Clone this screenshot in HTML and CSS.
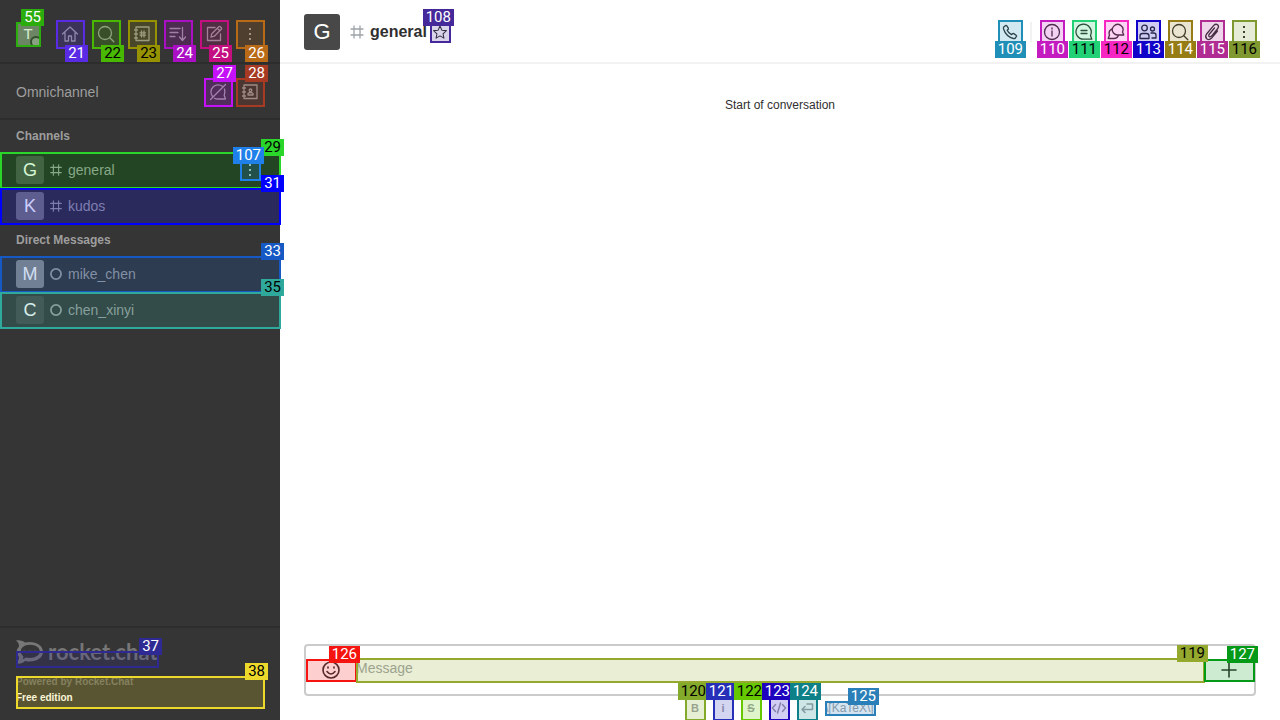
FILE: index.html
```
<!DOCTYPE html>
<html lang="en">
<head>
<meta charset="utf-8">
<title>general</title>
<meta name="viewport" content="width=device-width, initial-scale=1">
<link rel="stylesheet" href="styles.css">
</head>
<body>
<svg class="defs" aria-hidden="true">
  <symbol id="hash" viewBox="0 0 16 16"><path d="M5 2v12M11 2v12M2 5h12M2 11h12"/></symbol>
  <symbol id="search" viewBox="0 0 20 20"><circle cx="9" cy="9" r="6.5"/><path d="M13.8 13.8l4 4"/></symbol>
  <symbol id="kebab" viewBox="0 0 20 20"><path class="solid" d="M9 4h2v2H9zM9 9h2v2H9zM9 14h2v2H9z"/></symbol>
</svg>
<div class="app">
  <aside class="sidebar">
    <header class="topbar">
      <button class="mark up m55 user" aria-label="User menu"><span class="initial">T</span><i class="presence"></i><b class="tag">55</b></button>
      <nav class="tools">
        <button class="mark m21 tool" aria-label="Home"><svg viewBox="0 0 20 20"><path d="M2.500 10 10 3l7.500 7M5 8.500v8.500h3.500V12h3v5H15V8.500"/></svg><b class="tag">21</b></button>
        <button class="mark m22 tool ink" aria-label="Search"><svg><use href="#search"/></svg><b class="tag">22</b></button>
        <button class="mark m23 tool ink" aria-label="Directory"><svg viewBox="0 0 20 20"><path d="M4 3h13v13.500H4zM2.500 6h3M2.500 10h3M2.500 14h3M9.500 7v6M12 7v6M8 8.800h5.500M8 11.200h5.500"/></svg><b class="tag">23</b></button>
        <button class="mark m24 tool" aria-label="Display"><svg viewBox="0 0 20 20"><path d="M2 4.500h10M2 8.500h8M2 12.500h5M14.500 3.500v12.500M11.500 13l3 3.500L17.500 13"/></svg><b class="tag">24</b></button>
        <button class="mark m25 tool" aria-label="Create new"><svg viewBox="0 0 20 20"><path d="M11 3.500H3.500v13h13V10M7 13.200l.8-3.500 7-7q.8-.6 1.500 0l1 1q.7.7 0 1.500l-7 7zM13.300 4.200l2.500 2.500"/></svg><b class="tag">25</b></button>
        <button class="mark m26 tool" aria-label="More"><svg><use href="#kebab"/></svg><b class="tag">26</b></button>
      </nav>
    </header>
    <section class="omni">
      <span class="omni-title">Omnichannel</span>
      <button class="mark up m27 tool" aria-label="Turn on answer chats"><svg viewBox="0 0 20 20"><path d="M4.500 14.500A7.200 7.200 0 0 1 14.500 4.300M16.500 7q1 3.500-.3 6.300l1.300 3.700H10q-2 0-3.500-.8M2.500 17.500l15-15"/></svg><b class="tag">27</b></button>
      <button class="mark up m28 tool" aria-label="Contact center"><svg viewBox="0 0 20 20"><path d="M4 3h13v13.500H4zM2.500 6h3M2.500 10h3M2.500 14h3M8 13v-1.500q2.500-2 5 0V13z"/><circle cx="10.500" cy="8.300" r="1.300"/></svg><b class="tag">28</b></button>
    </section>
    <nav class="rooms">
      <h2>Channels</h2>
      <div class="mark up m29 ink room active"><a href="#general"><span class="avatar dark">G</span><svg class="kind"><use href="#hash"/></svg><span class="label">general</span></a><button class="mark up m107 row-menu" aria-label="Room menu"><svg><use href="#kebab"/></svg><b class="tag front">107</b></button><b class="tag">29</b></div>
      <div class="mark up m31 room"><a href="#kudos"><span class="avatar mid">K</span><svg class="kind"><use href="#hash"/></svg><span class="label">kudos</span></a><b class="tag">31</b></div>
      <h2>Direct Messages</h2>
      <div class="mark up m33 room"><a href="#mike"><span class="avatar light">M</span><svg class="kind" viewBox="0 0 16 16"><circle class="ring" cx="8" cy="8" r="5.800"/></svg><span class="label">mike_chen</span></a><b class="tag">33</b></div>
      <div class="mark up m35 ink room"><a href="#chen"><span class="avatar dark">C</span><svg class="kind" viewBox="0 0 16 16"><circle class="ring" cx="8" cy="8" r="5.800"/></svg><span class="label">chen_xinyi</span></a><b class="tag">35</b></div>
    </nav>
    <footer class="brand">
      <a class="mark up m37 logo" href="#home">
        <svg viewBox="0 0 28 24" aria-hidden="true"><path class="solid" fill-rule="evenodd" d="M0 .5C3.500-.3 7 .7 9 2.500c9-2 18 2 18 9.300S18 23 9 21C7 23.200 3.500 24.200 0 23.500 2.500 21 3.500 18.500 2.800 16.500 0 14 0 9.500 2.800 7 3.500 5 2.500 2.500 0 .5zM14 4.800C8.500 4.800 4.800 7.600 4.800 11.500c0 2 1 3.600 2.500 4.800q.1 1.700-.8 3 2.200-.8 3.300-1.900c7.500 1.700 14-1.200 14-5.900C23.800 7.600 19.500 4.800 14 4.800z"/><path class="solid" d="M7.500 10.800h1.800v1.800H7.500zM13 10.800h1.800v1.800H13zM18.500 10.800h1.800v1.800h-1.800z"/></svg>
        <span class="wordmark">rocket.chat</span><b class="tag">37</b>
      </a>
      <div class="mark up m38 ink edition"><a class="powered" href="#powered">Powered by Rocket.Chat</a><span>Free edition</span><b class="tag">38</b></div>
    </footer>
  </aside>

  <main class="main">
    <header class="room-header">
      <span class="avatar dark big">G</span>
      <svg class="kind"><use href="#hash"/></svg>
      <h1>general</h1>
      <button class="mark up m108 star" aria-label="Favorite"><svg viewBox="0 0 20 20"><path d="M10 2.500l2.300 5.200 5.700.6-4.200 3.900 1.100 5.500L10 14.900l-4.900 2.800 1.100-5.500L2 8.300l5.700-.6z"/></svg><b class="tag">108</b></button>
      <div class="actions">
        <button class="mark m109 action" aria-label="Call"><svg viewBox="0 0 20 20"><path d="M4 4.800 5.600 3.500q.7-.4 1.200.3l1.500 2.400q.4.800-.3 1.300l-.8.800q1.200 2.800 4.300 4.400l.9-.9q.7-.6 1.400-.2l2.300 1.600q.7.500.3 1.200l-1 1.600q-.8.900-2 .5C8.800 15.200 4.900 11.200 3.500 6.700q-.3-1.200.5-1.900z"/></svg><b class="tag">109</b></button>
        <i class="divider"></i>
        <button class="mark m110 action" aria-label="Room information"><svg viewBox="0 0 20 20"><circle cx="10" cy="10" r="7.500"/><path d="M10 9v5M10 6v1"/></svg><b class="tag">110</b></button>
        <button class="mark m111 ink action" aria-label="Threads"><svg viewBox="0 0 20 20"><path d="M16.500 13.500q2-4.500-.8-8A7.500 7.500 0 1 0 10 17.200h7.800zM7 8.500h6M7 11.500h6"/></svg><b class="tag">111</b></button>
        <button class="mark m112 ink action" aria-label="Discussion"><svg viewBox="0 0 20 20"><path d="M7.500 11A5.300 5.300 0 1 1 16.500 10l1.300 3H12q-3 0-4.500-2zM6 6.800A5 5 0 0 0 3.500 13l-1.300 3.500H8q3.500 0 4.500-3.500"/></svg><b class="tag">112</b></button>
        <button class="mark m113 action" aria-label="Members"><svg viewBox="0 0 20 20"><circle cx="6.500" cy="6" r="2.800"/><circle cx="14.500" cy="7" r="2"/><path d="M2 16.500v-2.500q0-2.500 2.500-2.500h4q2.500 0 2.500 2.500v2.500zM13 11h2.500q2.500 0 2.500 2v3H14"/></svg><b class="tag">113</b></button>
        <button class="mark m114 action" aria-label="Search messages"><svg><use href="#search"/></svg><b class="tag">114</b></button>
        <button class="mark m115 action" aria-label="Files"><svg viewBox="0 0 20 20"><path d="M12.500 6 7 12.500q-.8 1.500.3 2.200 1 .6 2-.4l6.500-7.800q1.500-2.200-.2-3.700-1.900-1.400-3.800.6L4.600 12q-1.900 2.700.1 4.700 2.400 1.900 4.700-.4L15.500 9"/></svg><b class="tag">115</b></button>
        <button class="mark m116 ink action" aria-label="Options"><svg><use href="#kebab"/></svg><b class="tag">116</b></button>
      </div>
    </header>
    <section class="messages"><p>Start of conversation</p></section>
    <section class="composer">
      <div class="field">
        <button class="mark up m126 side" aria-label="Emoji"><svg viewBox="0 0 20 20"><circle cx="10" cy="10" r="8"/><path d="M6 11.500q4 5 8 0M7 7v1M13 7v1"/></svg><b class="tag">126</b></button>
        <label class="mark up m119 ink entry"><textarea rows="1" placeholder="Message" aria-label="Message"></textarea><b class="tag">119</b></label>
        <button class="mark up m127 side" aria-label="More actions"><svg viewBox="0 0 20 20"><path d="M10 3v14M3 10h14"/></svg><b class="tag">127</b></button>
      </div>
      <div class="format">
        <button class="mark up m120 ink" aria-label="Bold"><span class="glyph">B</span><b class="tag">120</b></button>
        <button class="mark up m121" aria-label="Italic"><span class="glyph">i</span><b class="tag">121</b></button>
        <button class="mark up m122 ink" aria-label="Strike"><span class="glyph strike">S</span><b class="tag">122</b></button>
        <button class="mark up m123" aria-label="Code"><svg viewBox="0 0 16 16"><path d="M4.500 4.500 1.500 8l3 3.500M11.500 4.500l3 3.500-3 3.500M9.500 3l-3 10"/></svg><b class="tag">123</b></button>
        <button class="mark up m124" aria-label="Multi line"><svg viewBox="0 0 16 16"><path d="M8 4h5.500v5.500H3M6 6.500l-3 3 3 3"/></svg><b class="tag">124</b></button>
        <a class="mark up m125 katex" href="#katex">\[KaTeX\]<b class="tag">125</b></a>
      </div>
    </section>
  </main>
</div>
</body>
</html>
```
FILE: styles.css
```
* { box-sizing: border-box; }
body { margin: 0; font-family: "Liberation Sans", Arial, sans-serif; font-size: 14px; color: #2f2f2f; background: #fff; }
button { padding: 0; border: 0; background: none; color: inherit; font: inherit; flex: none; display: flex; align-items: center; justify-content: center; }
a { color: inherit; text-decoration: none; }
h1, h2, p { margin: 0; }
svg { width: 20px; height: 20px; flex: none; fill: none; stroke: currentColor; stroke-width: 1.3; stroke-linecap: round; stroke-linejoin: round; }
.defs { position: absolute; width: 0; height: 0; }
.solid { fill: currentColor; stroke: none; }

.app { display: flex; height: 100vh; overflow: hidden; }

/* Numbered outlines */
.mark { position: relative; --c: #000; --on: #fff; }
.mark.ink { --on: #000; }
.mark::before { content: ""; position: absolute; z-index: 1; inset: 0 -1px -1px 0; border: 2px solid var(--c); background: color-mix(in srgb, var(--c) 20%, transparent); pointer-events: none; }
.tag { position: absolute; z-index: 2; right: -4px; top: calc(100% - 3px); height: 17px; padding: 0 3px; background: var(--c); color: var(--on); font: 400 15px/17px Roboto, sans-serif; white-space: nowrap; }
.up > .tag { top: auto; bottom: calc(100% - 4px); }
.tag.front { z-index: 3; }
.m21 { --c: #5a2be5; }
.m22 { --c: #49b800; }
.m23 { --c: #969200; }
.m24 { --c: #ab0fc4; }
.m25 { --c: #c40f80; }
.m26 { --c: #b96a17; }
.m27 { --c: #c511f7; }
.m28 { --c: #a63a23; }
.m29 { --c: #2bd62b; }
.m31 { --c: #0000ff; }
.m33 { --c: #1659c4; }
.m35 { --c: #2fa99b; }
.m37 { --c: #2f2a93; }
.m38 { --c: #ecd92c; }
.m55 { --c: #2bae0d; }
.m107 { --c: #1f80ea; --on: #fff; }
.m108 { --c: #452899; }
.m109 { --c: #1f8fb8; }
.m110 { --c: #c41bc0; }
.m111 { --c: #22d075; }
.m112 { --c: #f727c4; }
.m113 { --c: #1002c8; }
.m114 { --c: #967c14; }
.m115 { --c: #b02b92; }
.m116 { --c: #7f9930; }
.m119 { --c: #94a92d; }
.m120 { --c: #83aa2a; }
.m121 { --c: #272fb8; }
.m122 { --c: #66c800; }
.m123 { --c: #1e04bf; }
.m124 { --c: #0e8088; }
.m125 { --c: #2a7fb8; }
.m126 { --c: #f5140f; }
.m127 { --c: #049a18; }

/* Sidebar */
.sidebar { display: flex; flex-direction: column; flex: none; width: 280px; background: #353535; color: #9e9e9e; }
.topbar { display: flex; align-items: center; justify-content: space-between; height: 64px; padding: 4px 16px 0; box-shadow: inset 0 -2px #2d2d2d; }
.tools { display: flex; gap: 8px; }
.tool { width: 28px; height: 28px; }
.user { width: 24px; height: 24px; }
.initial { width: 24px; height: 24px; background: #7b7b7b; color: #fff; border-radius: 2px; font-size: 15px; line-height: 24px; }
.presence { position: absolute; right: -2px; bottom: -2px; width: 12px; height: 12px; border: 2px solid #353535; border-radius: 50%; background: #9e9e9e; }
.omni { display: flex; align-items: center; gap: 4px; height: 56px; padding: 0 16px; box-shadow: inset 0 -2px #2d2d2d; }
.omni-title { flex: 1; }
.rooms { flex: 1; }
.rooms h2 { padding: 0 16px; font-size: 12px; line-height: 32px; }
.room { display: flex; align-items: center; height: 36px; padding: 0 20px 0 16px; }
.room.active { background: #212121; }
.room a { display: flex; align-items: center; flex: 1; }
.avatar { display: flex; align-items: center; justify-content: center; flex: none; width: 28px; height: 28px; border-radius: 3px; color: #fff; font-size: 18px; }
.avatar.dark { background: #484848; }
.avatar.mid { background: #757575; }
.avatar.light { background: #8a8a8a; }
.avatar.big { width: 36px; height: 36px; font-size: 22px; }
.kind { width: 14px; height: 14px; margin: 0 5px; }
.ring { stroke-width: 2; }
.row-menu { width: 20px; height: 20px; color: #ccc; }
.row-menu svg { width: 20px; height: 20px; }
.brand { display: flex; flex-direction: column; align-items: stretch; gap: 12px; padding: 14px 16px 12px; box-shadow: inset 0 2px #2d2d2d; }
.logo { display: flex; align-items: center; align-self: flex-start; width: 142px; height: 24px; color: #777; }
.logo svg { width: 28px; height: 24px; }
.wordmark { margin-left: 4px; font: 700 22px/24px Lato, sans-serif; }
.logo::before { inset: 11px -1px -4px 0; }
.logo > .tag { bottom: 9px; }
.edition { display: flex; flex-direction: column; gap: 4px; padding-bottom: 4px; color: #fff; font-size: 10px; font-weight: 700; line-height: 12px; }
.powered { color: #6c6c6c; }

/* Conversation */
.main { display: flex; flex: 1; flex-direction: column; min-width: 0; }
.room-header { display: flex; align-items: center; height: 64px; padding: 0 24px; box-shadow: inset 0 -2px #f2f2f2; }
.room-header > .kind { width: 16px; height: 16px; margin: 0 5px 0 9px; color: #9ea2a8; }
.room-header h1 { font-size: 16px; line-height: 24px; }
.star { width: 20px; height: 20px; margin-left: 3px; }
.star svg { width: 16px; height: 16px; }
.actions { display: flex; align-items: center; gap: 8px; margin-left: auto; }
.action { width: 24px; height: 24px; }
.divider { width: 2px; height: 20px; background: #f2f2f2; }
.messages { flex: 1; padding-top: 34px; font-size: 12px; line-height: 14px; text-align: center; }
.composer { padding: 0 24px; }
.field { display: flex; align-items: center; height: 52px; border: 2px solid #cbcbcb; border-radius: 4px; }
.side { width: 50px; height: 22px; }
.side svg { stroke-width: 1.6; }
.entry { display: flex; flex: 1; height: 24px; }
.entry textarea { flex: 1; min-width: 0; padding: 0; border: 0; outline: 0; resize: none; background: none; color: inherit; font: 14px/20px "Liberation Sans", Arial, sans-serif; }
.entry textarea::placeholder { color: #9ea2a8; opacity: 1; }
.format { display: flex; align-items: center; justify-content: center; gap: 8px; height: 24px; color: #9ea2a8; }
.format button { width: 20px; height: 24px; }
.format svg { width: 16px; height: 16px; stroke-width: 1.5; }
.glyph { font-size: 11px; font-weight: 700; }
.strike { text-decoration: line-through; }
.katex { width: 50px; font-size: 12px; line-height: 14px; white-space: nowrap; }
```
